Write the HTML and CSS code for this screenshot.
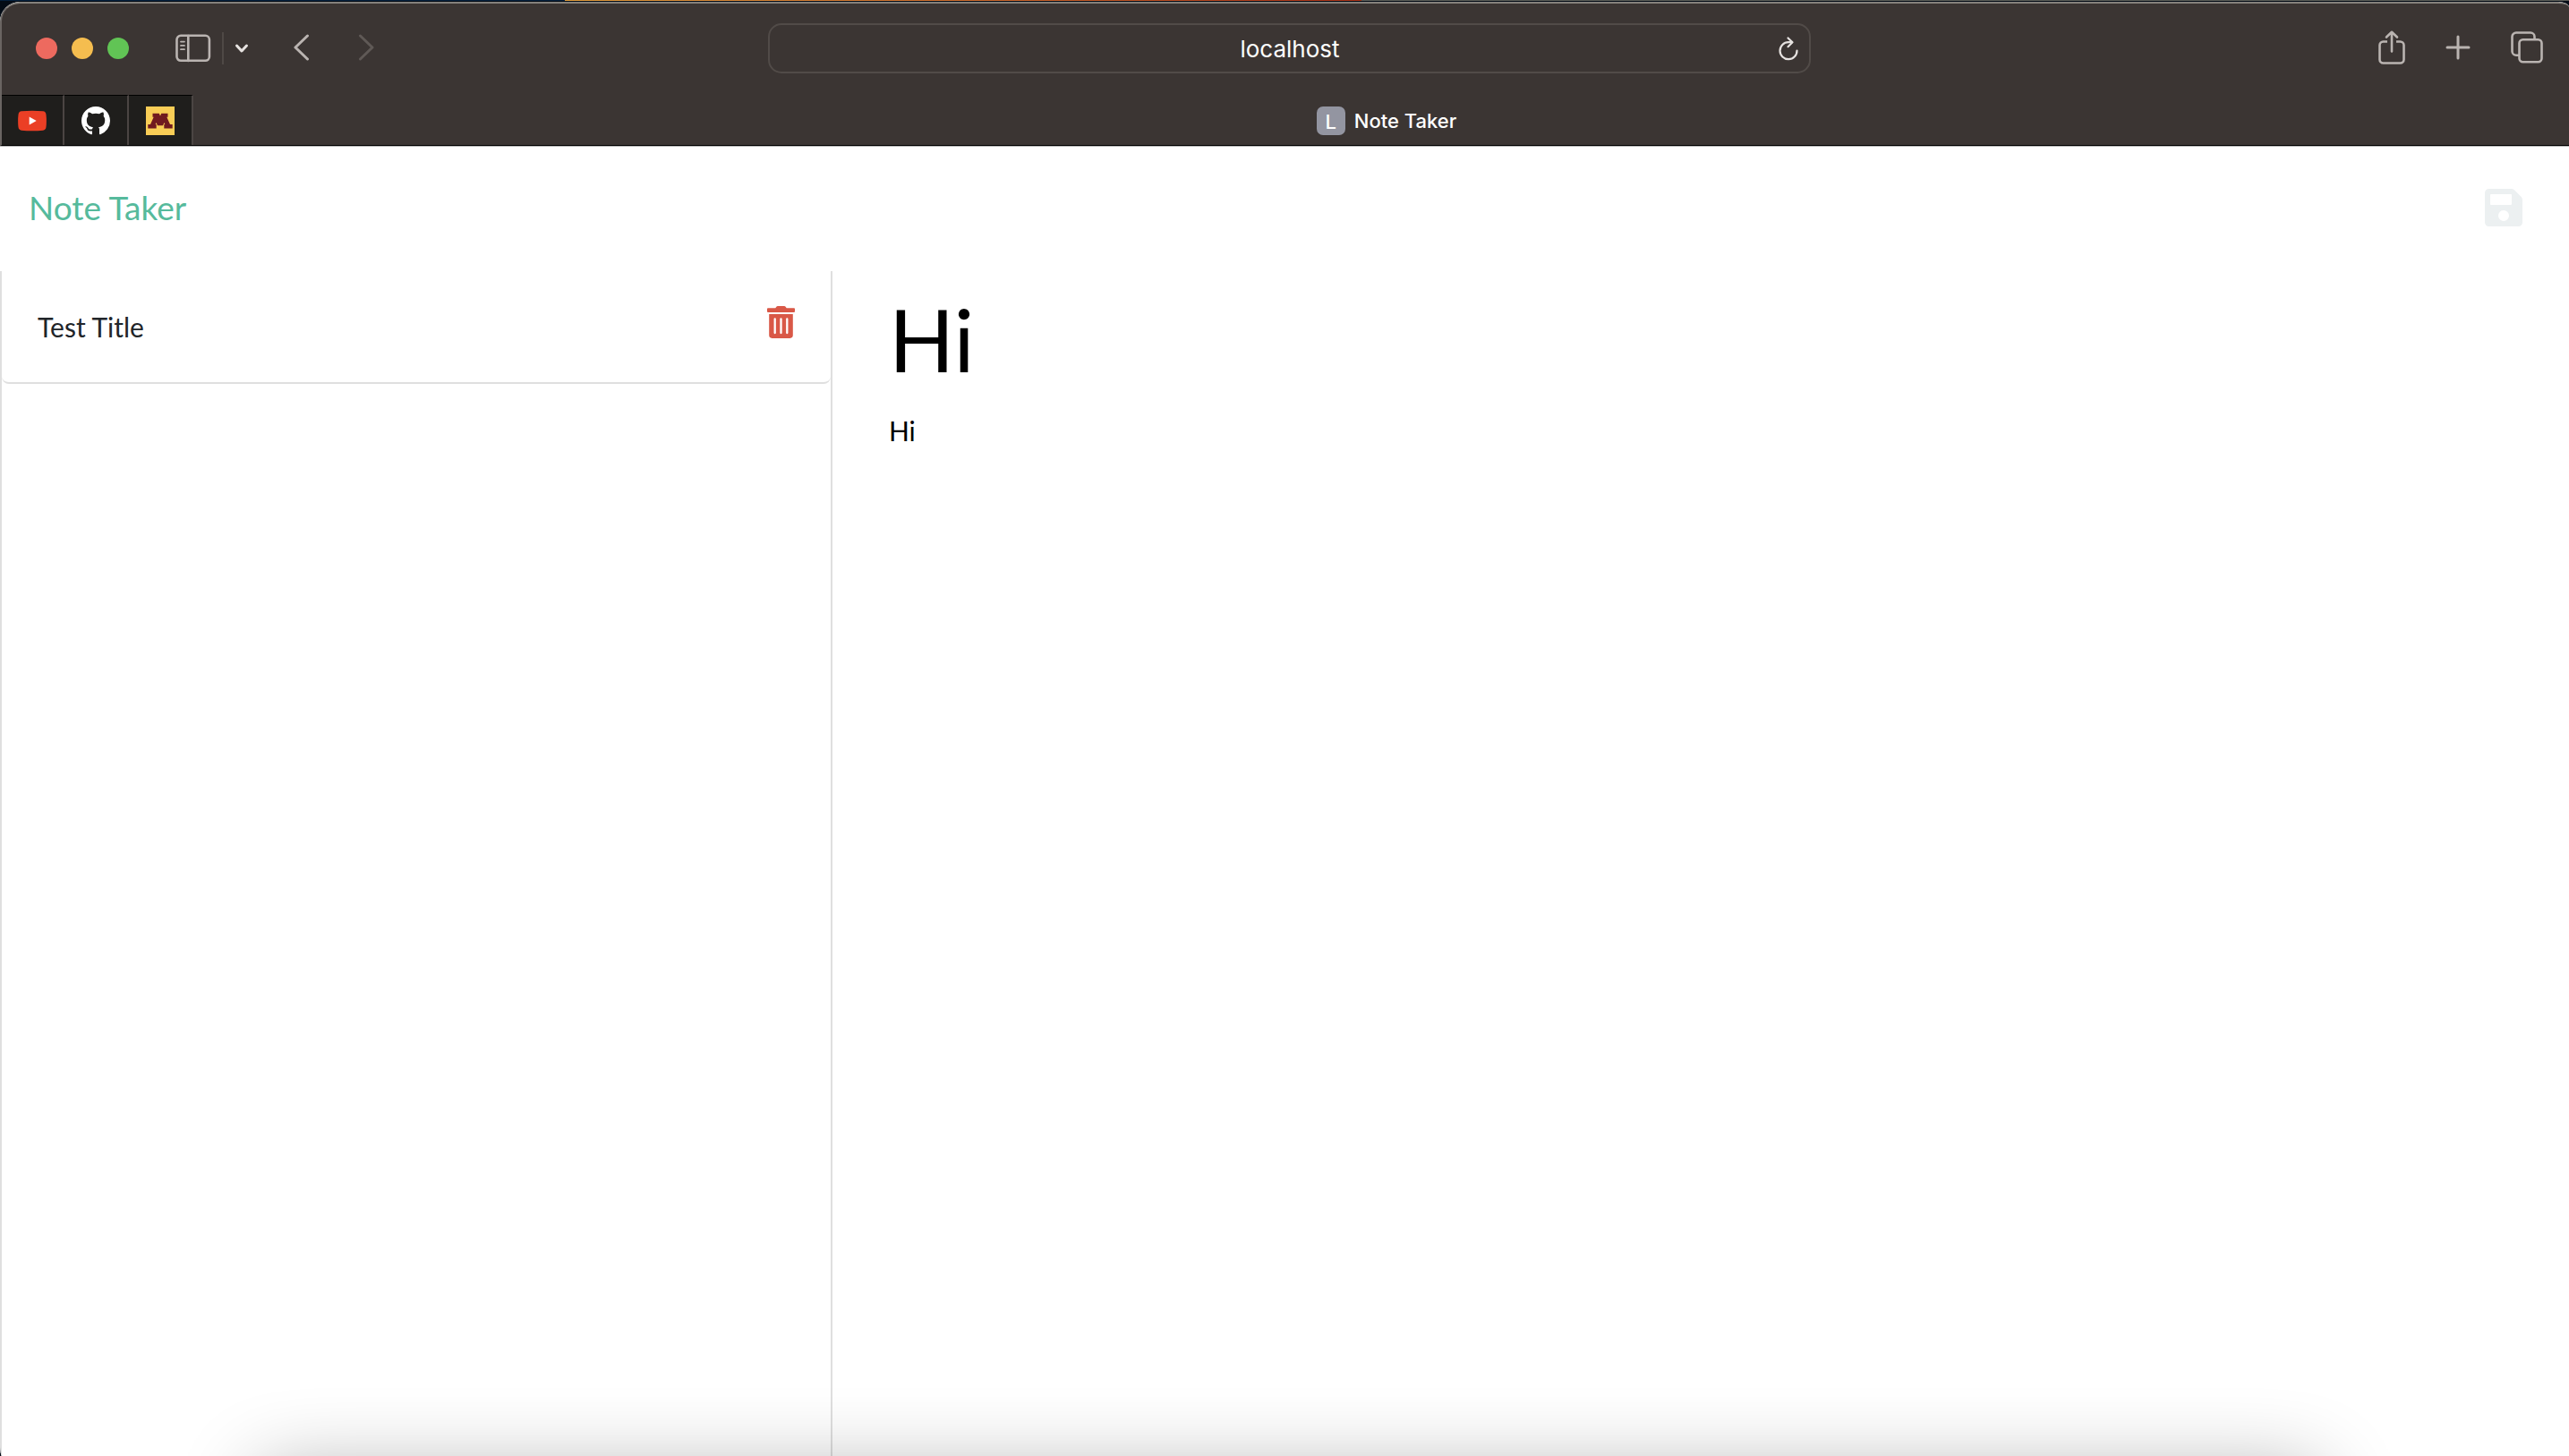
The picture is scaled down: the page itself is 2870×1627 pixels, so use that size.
FILE: index.html
```
<!DOCTYPE html>
<html lang="en">
<head>
<meta charset="utf-8">
<title>Note Taker</title>
<link rel="stylesheet" href="styles.css">
</head>
<body>
<div class="window">
  <header class="chrome">
    <div class="toolbar">
      <div class="tools tools-left">
        <div class="lights">
          <button class="light light-close" aria-label="Close"></button>
          <button class="light light-min" aria-label="Minimize"></button>
          <button class="light light-max" aria-label="Zoom"></button>
        </div>
        <div class="sidebar-tools">
          <button class="icon-btn" aria-label="Sidebar">
            <svg width="40" height="32" viewBox="0 0 40 32" fill="none" stroke="currentColor" stroke-width="2.6" stroke-linecap="round"><rect x="1.5" y="1.8" width="36.4" height="28" rx="4.5"/><path d="M14.3 2v28"/><path d="M6 8.6h4M6 12.9h4M6 17.2h4" stroke-width="1.8"/></svg>
          </button>
          <span class="tool-divider"></span>
          <button class="icon-btn bright" aria-label="Tab groups">
            <svg width="16" height="12" viewBox="0 0 16 12" fill="none" stroke="currentColor" stroke-width="3" stroke-linecap="round" stroke-linejoin="round"><path d="M2.5 3l5.5 6 5.500-6"/></svg>
          </button>
        </div>
        <div class="nav-tools">
          <button class="icon-btn" aria-label="Back">
            <svg width="18" height="30" viewBox="0 0 18 30" fill="none" stroke="currentColor" stroke-width="3" stroke-linecap="round" stroke-linejoin="round"><path d="M15.500 2L2 15l13.500 13"/></svg>
          </button>
          <button class="icon-btn dim" aria-label="Forward" disabled>
            <svg width="18" height="30" viewBox="0 0 18 30" fill="none" stroke="currentColor" stroke-width="3" stroke-linecap="round" stroke-linejoin="round"><path d="M2.500 2L16 15 2.500 28"/></svg>
          </button>
        </div>
      </div>
      <div class="address">
        <input class="address-input" type="text" aria-label="Address" value="localhost">
        <button class="icon-btn bright reload" aria-label="Reload">
          <svg width="24" height="28" viewBox="0 0 24 28" fill="none" stroke="currentColor" stroke-width="2.200" stroke-linecap="round" stroke-linejoin="round"><path d="M15.500 7.200H12A9.500 9.500 0 1 0 21.500 16.500"/><path d="M11.500 2.500l5 4.800-5 4.900"/></svg>
        </button>
      </div>
      <div class="tools tools-right">
        <button class="icon-btn" aria-label="Share">
          <svg width="30" height="38" viewBox="0 0 30 38" fill="none" stroke="currentColor" stroke-width="2.600" stroke-linecap="round" stroke-linejoin="round"><path d="M10 12.500H5.500a4 4 0 0 0-4 4V32.500a4 4 0 0 0 4 4H24.500a4 4 0 0 0 4-4V16.500a4 4 0 0 0-4-4H20" stroke-linecap="butt"/><path d="M15 23.500V2M9 7.500L15 1.800l6 5.700"/></svg>
        </button>
        <button class="icon-btn" aria-label="New tab">
          <svg width="28" height="28" viewBox="0 0 28 28" fill="none" stroke="currentColor" stroke-width="3" stroke-linecap="round"><path d="M14 2v24M2 14h24"/></svg>
        </button>
        <button class="icon-btn" aria-label="Tab overview">
          <svg width="36" height="36" viewBox="0 0 36 36" fill="none" stroke="currentColor" stroke-width="2.600"><rect x="9.500" y="9.300" width="25" height="25" rx="4"/><path d="M9 26.700H6a4.500 4.500 0 0 1-4.500-4.500V6A4.500 4.500 0 0 1 6 1.500H22A4.500 4.500 0 0 1 26.500 6V9"/></svg>
        </button>
      </div>
    </div>
    <nav class="tabs" aria-label="Tabs">
      <a class="pin" href="#youtube" aria-label="YouTube">
        <svg width="32" height="32" viewBox="0 0 32 32"><path fill="#eb3f25" d="M4 5.300Q16 4.300 28 5.300Q31 5.600 31.500 9Q32.300 16 31.500 23Q31 26.400 28 26.700Q16 27.700 4 26.700Q1 26.400.5 23Q-.3 16 .5 9Q1 5.600 4 5.300z"/><path fill="#fff" d="M12.700 11.400v9.200l8-4.600z"/></svg>
      </a>
      <a class="pin" href="#github" aria-label="GitHub">
        <svg width="32" height="32" viewBox="0 0 16 16" fill="#fff"><path d="M8 0C3.580 0 0 3.580 0 8c0 3.540 2.290 6.530 5.470 7.590.4.070.55-.17.55-.38 0-.19-.01-.82-.01-1.490-2.010.37-2.530-.49-2.690-.94-.09-.23-.48-.94-.82-1.130-.28-.15-.68-.52-.01-.53.63-.01 1.080.58 1.230.82.72 1.210 1.870.87 2.330.66.07-.52.28-.87.51-1.070-1.780-.2-3.640-.89-3.640-3.950 0-.87.31-1.590.82-2.150-.08-.2-.36-1.020.08-2.120 0 0 .67-.21 2.200.82.64-.18 1.320-.27 2-.27s1.360.09 2 .27c1.530-1.040 2.200-.82 2.200-.82.44 1.100.16 1.920.08 2.120.51.56.82 1.270.82 2.150 0 3.070-1.870 3.750-3.650 3.950.29.25.54.73.54 1.480 0 1.070-.01 1.930-.01 2.200 0 .21.15.46.55.38A8.010 8.010 0 0 0 16 8c0-4.420-3.580-8-8-8z"/></svg>
      </a>
      <a class="pin" href="#umn" aria-label="University of Minnesota">
        <svg width="32" height="32" viewBox="0 0 32 32"><path fill="#f8cd56" d="M0 0h32v32H0z"/><path fill="#701a1f" d="M7.500 7.800h7.200L16 10.500l1.300-2.700h7.200v4h-1.200l3.700 8.200h2.700v4.400h-9.400V20h1l-.8-2-1.500 3.200h-6L11.500 18l-.8 2h1v4.400H2.300V20H5l3.700-8.200H7.500z"/></svg>
      </a>
      <a class="tab" href="#notes" aria-current="page"><span class="favicon">L</span><span>Note Taker</span></a>
    </nav>
  </header>

  <main class="page">
    <div class="navbar">
      <a class="brand" href="#home">Note Taker</a>
      <button class="save" aria-label="Save note">
        <svg width="42" height="42" viewBox="0 0 42 42" fill="currentColor" fill-rule="evenodd"><path d="M4.500 0H29.700a4.500 4.500 0 0 1 3.200 1.300L40.700 9.100a4.500 4.500 0 0 1 1.300 3.200V37.500a4.500 4.500 0 0 1-4.500 4.500H4.500A4.500 4.500 0 0 1 0 37.500V4.500A4.500 4.500 0 0 1 4.500 0zM7 6a1 1 0 0 0-1 1V17a1 1 0 0 0 1 1H29a1 1 0 0 0 1-1V7a1 1 0 0 0-1-1zM21 24a6 6 0 1 0 0 12a6 6 0 0 0 0-12z"/></svg>
      </button>
    </div>
    <div class="columns">
      <ul class="notes">
        <li class="note">
          <span>Test Title</span>
          <button class="trash" aria-label="Delete note">
            <svg width="31" height="36" viewBox="0 0 31 36" fill="currentColor" fill-rule="evenodd"><path d="M1 2.300H9.300L10.200.9Q10.800 0 12 0H19Q20.200 0 20.800.9L21.700 2.300H30a1 1 0 0 1 1 1V6a1 1 0 0 1-1 1H1A1 1 0 0 1 0 6V3.300a1 1 0 0 1 1-1z"/><path d="M2.200 9H28.800V32.600a3.300 3.300 0 0 1-3.300 3.300H5.500a3.300 3.300 0 0 1-3.300-3.300zM8.700 13.300a1.150 1.150 0 0 0-1.150 1.150V30a1.150 1.150 0 0 0 2.300 0V14.450a1.150 1.150 0 0 0-1.150-1.150zM15.500 13.300a1.150 1.150 0 0 0-1.150 1.150V30a1.150 1.150 0 0 0 2.300 0V14.450a1.150 1.150 0 0 0-1.150-1.150zM22.300 13.300a1.150 1.150 0 0 0-1.150 1.150V30a1.150 1.150 0 0 0 2.300 0V14.450a1.150 1.150 0 0 0-1.150-1.150z"/></svg>
          </button>
        </li>
      </ul>
      <form class="editor">
        <input class="note-title" type="text" aria-label="Note title" value="Hi">
        <textarea class="note-text" aria-label="Note text">Hi</textarea>
      </form>
    </div>
    <div class="dock-shade"></div>
  </main>
</div>
</body>
</html>
```

FILE: styles.css
```
* {
  box-sizing: border-box;
}

body {
  margin: 0;
  min-height: 100vh;
  display: flex;
  flex-direction: column;
  padding-top: 2px;
  background: linear-gradient(90deg, #05203c 22%, #dd9a3c 22%, #cb6a2d 38%, #a83218 53%, #5c5e58 53%) top / 100% 1px no-repeat #040c16;
  font-family: Lato, sans-serif;
  font-size: 30px;
}

button,
input,
textarea {
  margin: 0;
  padding: 0;
  border: 0;
  background: none;
  color: inherit;
  font: inherit;
  outline: none;
}

button {
  display: block;
  line-height: 0;
}

svg {
  display: block;
}

.window {
  flex: 1;
  display: flex;
  flex-direction: column;
  border-radius: 22px 12px 0 2px / 22px 6px 0 16px;
  overflow: hidden;
  background: #fff;
}

.chrome {
  border-top: 2px solid #85817c;
  border-left: 2px solid #6a6562;
  border-bottom: 1px solid #000;
  border-radius: 22px 12px 0 0 / 22px 6px 0 0;
  background: #3b3533;
  box-shadow: 0 1px 0 #b9b9b9;
  color: #bab4b1;
  font-family: Inter, sans-serif;
}

.toolbar {
  display: flex;
  align-items: center;
  padding: 22px 29px 24px 38px;
}

.tools {
  flex: 1;
  display: flex;
  align-items: center;
}

.tools-left {
  gap: 52px;
}

.tools-right {
  justify-content: flex-end;
  gap: 45px;
  padding-bottom: 3px;
}

.lights {
  display: flex;
  gap: 16px;
}

.light {
  width: 24px;
  height: 24px;
  border-radius: 50%;
}

.light-close {
  background: #ed6a5f;
}

.light-min {
  background: #f5bd4f;
}

.light-max {
  background: #61c455;
}

.sidebar-tools {
  display: flex;
  align-items: center;
  gap: 12px;
}

.tool-divider {
  width: 2px;
  height: 36px;
  background: #4f4946;
}

.nav-tools {
  display: flex;
  gap: 54px;
  margin-left: -2px;
  padding-bottom: 2px;
}

.bright {
  color: #e6e2e0;
}

.dim {
  color: #5f5956;
}

.address {
  display: flex;
  align-items: center;
  width: 41.6%;
  height: 56px;
  padding: 0 11px 0 36px;
  border: 2px solid #514b48;
  border-radius: 15px;
}

.address-input {
  flex: 1;
  min-width: 0;
  color: #fff;
  font-size: 26px;
  text-align: center;
}

.tabs {
  display: flex;
  height: 56px;
}

.pin {
  display: flex;
  align-items: center;
  justify-content: center;
  width: 72px;
  border-top: 1px solid #000;
  border-right: 2px solid #4b4543;
  background: #1f1e1c;
}

.pin:first-child {
  width: 70px;
}

.tab {
  flex: 1;
  display: flex;
  align-items: center;
  justify-content: center;
  gap: 10px;
  padding: 2px 0 0 12px;
  color: #fff;
  font-size: 22px;
  font-weight: 500;
  text-decoration: none;
}

.favicon {
  width: 32px;
  height: 32px;
  border-radius: 7px;
  background: #9395a1;
  line-height: 34px;
  text-align: center;
}

.page {
  position: relative;
  flex: 1;
  display: flex;
  flex-direction: column;
  overflow: hidden;
}

.navbar {
  display: flex;
  align-items: center;
  justify-content: space-between;
  height: 140px;
  padding: 0 52px 2px 32px;
}

.brand {
  color: #56ba9c;
  font-size: 37px;
  line-height: 60px;
  text-decoration: none;
}

.save {
  color: #ecf0f1;
}

.columns {
  flex: 1;
  display: grid;
  grid-template-columns: 32.4% 1fr;
}

.notes {
  margin: 0;
  padding: 0;
  border: 2px solid #dfdfdf;
  border-width: 0 2px;
  list-style: none;
}

.note {
  display: flex;
  align-items: center;
  justify-content: space-between;
  height: 126px;
  padding: 0 40px;
  border-bottom: 2px solid #dfdfdf;
  border-radius: 8px;
  color: #212529;
}

.trash {
  padding-bottom: 10px;
  color: #d95847;
}

.editor {
  display: flex;
  flex-direction: column;
  gap: 26px;
  padding: 20px 63px;
}

.note-title {
  height: 110px;
  color: #000;
  font-size: 96px;
}

.note-text {
  flex: 1;
  resize: none;
  color: #000;
  line-height: 45px;
}

/* Soft shadow thrown up from the dock below the window */
.dock-shade {
  position: absolute;
  top: calc(100% + 18px);
  left: 290px;
  right: 280px;
  height: 200px;
  box-shadow: 0 0 90px rgba(0, 0, 0, 0.32);
  pointer-events: none;
}
```
